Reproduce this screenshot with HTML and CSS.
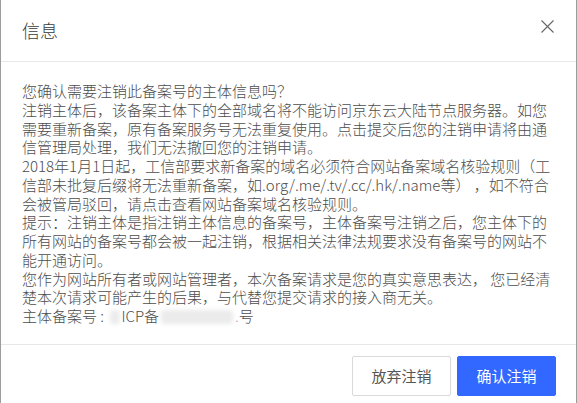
FILE: index.html
```html
<!DOCTYPE html>
<html lang="zh-CN">
<head>
<meta charset="utf-8">
<title>信息</title>
<link rel="stylesheet" href="styles.css">
</head>
<body>
<div class="dialog">
  <div class="dialog-header">
    <div class="dialog-title">信息</div>
    <button class="dialog-close" aria-label="关闭">
      <svg width="13" height="13" viewBox="0 0 13 13"><path d="M0.5 0.5 L12.5 12.5 M12.5 0.5 L0.5 12.5" stroke="#666" stroke-width="1.1" fill="none"/></svg>
    </button>
  </div>
  <div class="dialog-body">
    <p>您确认需要注销此备案号的主体信息吗？</p>
    <p>注销主体后，该备案主体下的全部域名将不能访问京东云大陆节点服务器。如您需要重新备案，原有备案服务号无法重复使用。点击提交后您的注销申请将由通信管理局处理，我们无法撤回您的注销申请。</p>
    <p>2018年1月1日起，工信部要求新备案的域名必须符合网站备案域名核验规则（工信部未批复后缀将无法重新备案，如.org/.me/.tv/.cc/.hk/.name等） ，如不符合会被管局驳回，请点击查看网站备案域名核验规则。</p>
    <p>提示：注销主体是指注销主体信息的备案号，主体备案号注销之后，您主体下的所有网站的备案号都会被一起注销，根据相关法律法规要求没有备案号的网站不能开通访问。</p>
    <p>您作为网站所有者或网站管理者，本次备案请求是您的真实意思表达， 您已经清楚本次请求可能产生的后果，与代替您提交请求的接入商无关。</p>
    <p class="last">主体备案号 : <span class="mask mask-short"></span>ICP备<span class="mask mask-long"></span><span class="dot">.</span>号</p>
  </div>
  <div class="dialog-footer">
    <button class="btn btn-default">放弃注销</button>
    <button class="btn btn-primary">确认注销</button>
  </div>
</div>
</body>
</html>
```

FILE: styles.css
```css
* { box-sizing: border-box; }
html, body {
  margin: 0;
  padding: 0;
  background: #fff;
}
body {
  font-family: "Noto Sans CJK SC", "Noto Sans", sans-serif;
  color: #333;
}
.dialog {
  width: 577px;
  height: 403px;
  border-left: 1px solid #9c9c9c;
  border-right: 1px solid #9c9c9c;
  background: #fff;
  display: flex;
  flex-direction: column;
  overflow: hidden;
}
.dialog-header {
  height: 62px;
  flex: none;
  display: flex;
  align-items: center;
  justify-content: space-between;
  padding: 0 22px 2px 21px;
  border-bottom: 1px solid #e8e8e8;
}
.dialog-title {
  font-size: 18px;
  line-height: 24px;
  color: #3a3a3a;
  font-weight: 300;
}
.dialog-close {
  border: 0;
  background: none;
  padding: 0;
  width: 13px;
  height: 13px;
  margin-top: -6px;
  display: flex;
  cursor: pointer;
}
.dialog-body {
  flex: none;
  padding: 20px 21px 18px 21px;
  font-size: 15px;
  line-height: 18.75px;
  color: #4d4d4d;
  font-weight: 300;
  border-bottom: 1px solid #e8e8e8;
}
.dialog-body p { margin: 0; }
.mask {
  display: inline-block;
  height: 14px;
  vertical-align: -2px;
  background: #ebebeb;
  filter: blur(2px);
  border-radius: 4px;
}
.mask-short { width: 10px; margin-left: 3px; margin-right: 1px; }
.mask-long { width: 72px; margin: 0 2px; }
.dot { color: #aaa; }
.dialog-footer {
  flex: 1;
  display: flex;
  justify-content: flex-end;
  align-items: flex-start;
  gap: 6px;
  padding: 11px 20px 0 0;
}
.btn {
  width: 99px;
  height: 40px;
  font-family: inherit;
  font-size: 15px;
  border-radius: 2px;
  cursor: pointer;
}
.btn-default {
  background: #fff;
  border: 1px solid #d9d9d9;
  color: #555;
}
.btn-primary {
  background: #3268ff;
  border: 1px solid #3268ff;
  color: #fff;
}
```
